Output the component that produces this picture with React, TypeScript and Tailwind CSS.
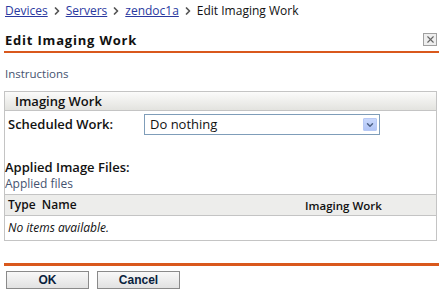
import { ChevronDown, ChevronRight, X } from 'lucide-react';

const Sep = () => <ChevronRight size={12} strokeWidth={3.5} className="text-[#555] mx-[3px] mt-[1px]" />;

export default function App() {
  return (
    <div className="w-[443px] h-[296px] bg-white text-[#111] font-['Open_Sans',sans-serif] text-[12px] relative overflow-hidden">
      {/* Breadcrumb */}
      <div className="flex items-center pl-[5px] pt-[1px] h-[20px] text-[12px]">
        <a className="text-[#2a39a0] underline">Devices</a>
        <Sep />
        <a className="text-[#2a39a0] underline">Servers</a>
        <Sep />
        <a className="text-[#2a39a0] underline">zendoc1a</a>
        <Sep />
        <span>Edit Imaging Work</span>
      </div>

      {/* Title */}
      <div className="mx-[4px] mt-[12px] flex items-end justify-between border-b-2 border-[#d9581c] pb-[4px] h-[21px]">
        <h1 className="font-bold text-[13px] tracking-[0.8px] pl-[1px] leading-none">Edit Imaging Work</h1>
        <button className="w-[14px] h-[13px] mr-[2px] mb-[1px] border border-[#a0a0a0] bg-[#eeeeee] flex items-center justify-center">
          <X size={11} strokeWidth={2.5} className="text-[#666]" />
        </button>
      </div>

      <div className="pl-[5px] mt-[12px] text-[11.5px] text-[#45536f]">Instructions</div>

      {/* Box */}
      <div className="mx-[4px] mt-[9px] w-[433px] border border-[#c4c4c4]">
        <div className="h-[19px] bg-gradient-to-b from-[#fbfbfa] to-[#e3e3df] border-b border-[#c4c4c4] pl-[10px] font-semibold text-[13px] leading-[18px]">
          Imaging Work
        </div>
        <div className="flex items-center h-[21px] pl-[3px] mt-[3px]">
          <span className="w-[136px] font-semibold text-[13px]">Scheduled Work:</span>
          <div className="w-[236px] h-[21px] border border-[#7f9db9] flex items-center justify-between pl-[5px] pr-[2px]">
            <span className="text-[13px]">Do nothing</span>
            <span className="w-[14px] h-[13px] bg-gradient-to-b from-[#c9d8fc] to-[#b1c5f7] border border-[#b7c9f5] rounded-[1px] flex items-center justify-center">
              <ChevronDown size={10} strokeWidth={3.5} className="text-[#4d6185]" />
            </span>
          </div>
        </div>
        <div className="mt-[24px] font-semibold text-[13px] leading-[16px]">Applied Image Files:</div>
        <div className="text-[12px] text-[#45536f] leading-[14px] mt-[2px]">Applied files</div>
        <div className="mt-[3px] h-[22px] bg-[#ededeb] border-y border-[#c4c4c4] flex items-center text-[12px] font-semibold">
          <span className="pl-[3px] w-[300px]">Type&nbsp; Name</span>
          <span className="text-[11.5px]">Imaging Work</span>
        </div>
        <div className="h-[24px] flex items-center pl-[3px] italic text-[12px]">No items available.</div>
      </div>

      {/* Footer */}
      <div className="mx-[4px] mt-[22px] border-t-[3px] border-[#d9581c] flex gap-[8px] pt-[5px] pl-[2px]">
        <button className="w-[83px] h-[18px] border border-[#8a8a8a] bg-gradient-to-b from-[#f8f8f8] to-[#e2e2e2] font-['Liberation_Sans',sans-serif] font-bold text-[12px] text-[#0a1f3e] leading-none">OK</button>
        <button className="w-[83px] h-[18px] border border-[#8a8a8a] bg-gradient-to-b from-[#f8f8f8] to-[#e2e2e2] font-['Liberation_Sans',sans-serif] font-bold text-[12px] text-[#0a1f3e] leading-none">Cancel</button>
      </div>
    </div>
  );
}
